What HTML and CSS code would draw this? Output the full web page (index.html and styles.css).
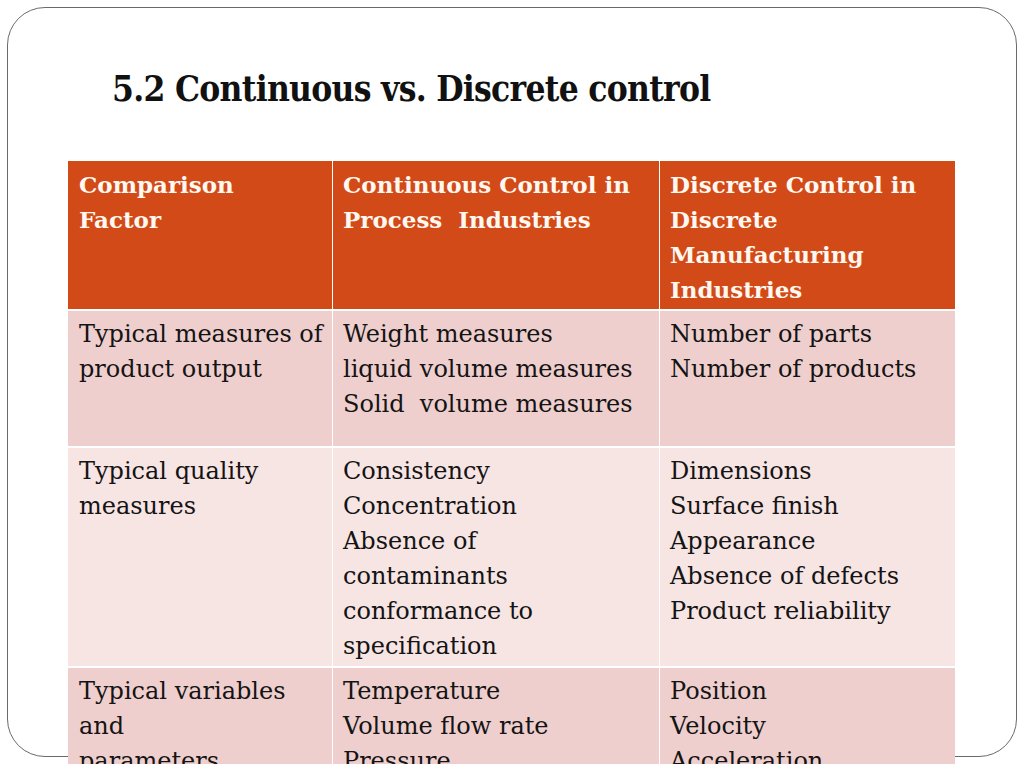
FILE: index.html
```html
<!DOCTYPE html>
<html>
<head>
<meta charset="utf-8">
<link rel="stylesheet" href="styles.css">
</head>
<body>
<div class="slide">
  <h1 class="title">5.2 Continuous vs. Discrete control</h1>
  <div class="table">
    <div class="cell head">Comparison<br>Factor</div>
    <div class="cell head">Continuous Control in<br>Process&nbsp; Industries</div>
    <div class="cell head">Discrete Control in<br>Discrete<br>Manufacturing<br>Industries</div>

    <div class="cell odd r1">Typical measures of<br>product output</div>
    <div class="cell odd r1">Weight measures<br>liquid volume measures<br>Solid&nbsp; volume measures</div>
    <div class="cell odd r1">Number of parts<br>Number of products</div>

    <div class="cell even r2">Typical quality<br>measures</div>
    <div class="cell even r2">Consistency<br>Concentration<br>Absence of<br>contaminants<br>conformance to<br>specification</div>
    <div class="cell even r2">Dimensions<br>Surface finish<br>Appearance<br>Absence of defects<br>Product reliability</div>

    <div class="cell odd r3">Typical variables<br>and<br>parameters</div>
    <div class="cell odd r3">Temperature<br>Volume flow rate<br>Pressure</div>
    <div class="cell odd r3">Position<br>Velocity<br>Acceleration</div>
  </div>
</div>
</body>
</html>
```
FILE: styles.css
```css
html, body {
  margin: 0;
  padding: 0;
  overflow: hidden;
  background: #ffffff;
}
.slide {
  margin: 7px;
  width: 1008px;
  height: 748px;
  border: 1px solid #6a6a6a;
  border-radius: 38px;
  position: relative;
}
.title {
  margin: 57px 0 0 104px;
  font-family: "DejaVu Serif Condensed", "DejaVu Serif", serif;
  font-stretch: condensed;
  font-weight: bold;
  font-size: 35px;
  line-height: 48px;
  height: 48px;
  color: #111;
  letter-spacing: -0.7px;
}
.table {
  margin: 48px 0 0 60px;
  width: 887px;
  display: grid;
  grid-template-columns: 264px 326px 295px;
  grid-template-rows: 148px 135px 218px 120px;
  column-gap: 1px;
  row-gap: 2px;
  background: #ffffff;
  position: relative;
}
.cell {
  font-family: "DejaVu Serif", serif;
  font-size: 24px;
  line-height: 35px;
  padding: 6px 6px 0 10px;
  color: #141414;
  white-space: nowrap;
  overflow: hidden;
}
.table .cell:nth-child(3n+1) {
  padding-left: 11px;
}
.head {
  background: #d24a18;
  color: #fff8f0;
  font-weight: bold;
  font-size: 23px;
}
.odd {
  background: #efcfce;
}
.even {
  background: #f7e5e4;
}
```
